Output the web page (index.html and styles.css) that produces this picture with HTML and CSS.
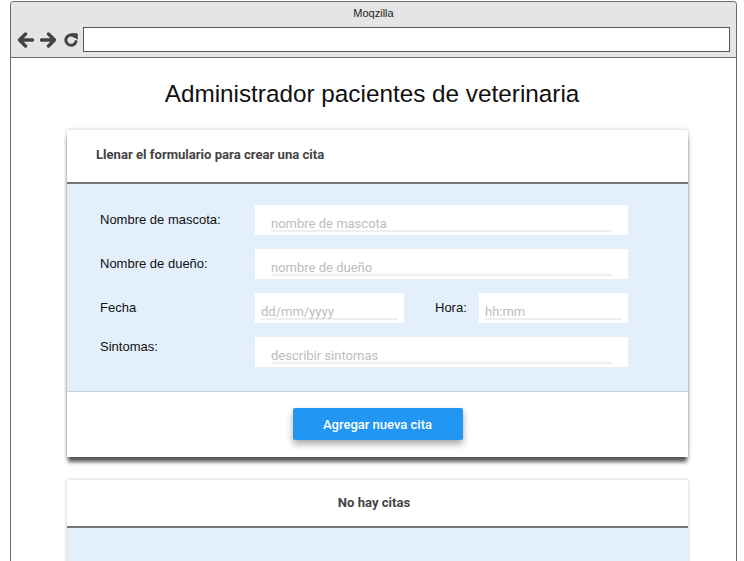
FILE: index.html
```html
<!DOCTYPE html>
<html lang="es">
<head>
<meta charset="utf-8">
<title>Moqzilla</title>
<link rel="stylesheet" href="styles.css">
</head>
<body>
<div class="browser">
  <div class="chrome">
    <div class="chrome-title">Moqzilla</div>
    <div class="chrome-bar">
      <div class="nav">
        <svg class="nav-icon" width="17" height="16" viewBox="0 0 17 16"><path d="M15.5 8H2.5M8.5 2L2.5 8l6 6" fill="none" stroke="#444" stroke-width="3.4" stroke-linecap="round" stroke-linejoin="round"/></svg>
        <svg class="nav-icon" width="17" height="16" viewBox="0 0 17 16"><path d="M1.5 8h13M8.5 2l6 6-6 6" fill="none" stroke="#444" stroke-width="3.4" stroke-linecap="round" stroke-linejoin="round"/></svg>
        <svg class="nav-icon reload" width="16" height="16" viewBox="0 0 16 16"><path d="M13 9.6A5.2 5.2 0 1 1 11.6 4.3" fill="none" stroke="#444" stroke-width="3" stroke-linecap="round"/><path d="M8.8 1.8h5.4v5.4z" fill="#444" stroke="#444" stroke-width="1" stroke-linejoin="round"/></svg>
      </div>
      <div class="address"></div>
    </div>
  </div>
  <div class="page">
    <h1 class="title">Administrador pacientes de veterinaria</h1>

    <section class="card">
      <div class="card-header">Llenar el formulario para crear una cita</div>
      <div class="card-body">
        <div class="row">
          <label class="label">Nombre de mascota:</label>
          <div class="field wide"><div class="line">nombre de mascota</div></div>
        </div>
        <div class="row">
          <label class="label">Nombre de dueño:</label>
          <div class="field wide"><div class="line">nombre de dueño</div></div>
        </div>
        <div class="row">
          <label class="label">Fecha</label>
          <div class="field half"><div class="line tight">dd/mm/yyyy</div></div>
          <label class="label hora">Hora:</label>
          <div class="field half"><div class="line tight">hh:mm</div></div>
        </div>
        <div class="row">
          <label class="label top">Sintomas:</label>
          <div class="field wide"><div class="line">describir sintomas</div></div>
        </div>
      </div>
      <div class="card-footer">
        <button class="btn" type="button">Agregar nueva cita</button>
      </div>
    </section>

    <section class="card second">
      <div class="card-header center">No hay citas</div>
      <div class="card-body empty"></div>
    </section>
  </div>
</div>
</body>
</html>
```

FILE: styles.css
```css
html, body {
  margin: 0;
  padding: 0;
  background: #fff;
}
body {
  font-family: "Liberation Sans", Arial, sans-serif;
  height: 561px;
  overflow: hidden;
}
.browser {
  margin: 1px 0 0 10px;
  width: 725px;
  border: 1px solid #6b6b6b;
  border-bottom: none;
  border-radius: 4px 4px 0 0;
  height: 600px;
}
.chrome {
  height: 55px;
  background: #e5e5e5;
  border-bottom: 1px solid #6b6b6b;
  border-radius: 3px 3px 0 0;
}
.chrome-title {
  text-align: center;
  font-size: 11px;
  color: #222;
  padding-top: 5px;
  height: 20px;
  line-height: 13px;
}
.chrome-bar {
  display: flex;
  align-items: center;
}
.nav {
  display: flex;
  align-items: center;
  gap: 6px;
  padding-left: 6px;
  width: 66px;
}
.nav-icon {
  display: block;
}
.address {
  width: 645px;
  height: 23px;
  background: #fff;
  border: 1px solid #555;
}
.page {
  padding-top: 21px;
}
.title {
  margin: 0 0 21px;
  font-weight: normal;
  font-size: 24.3px;
  line-height: 30px;
  text-align: center;
  color: #111;
  padding-right: 3px;
}
.card {
  margin-left: 56px;
  width: 621px;
  background: #fff;
  box-shadow: 0 6px 4px -1px rgba(0,0,0,0.65), 0 0 4px rgba(0,0,0,0.22);
}
.card-header {
  height: 52px;
  line-height: 50px;
  padding-left: 29px;
  font-family: Roboto, "Liberation Sans", sans-serif;
  font-weight: bold;
  font-size: 13.1px;
  color: #444;
  border-bottom: 2px solid #777;
}
.card-header.center {
  padding-left: 0;
  padding-right: 7px;
  text-align: center;
  height: 46px;
  line-height: 45px;
}
.card-body {
  background: #e3f0fb;
  padding: 21px 0 24px 33px;
  display: flex;
  flex-direction: column;
  gap: 14px;
  border-bottom: 1px solid #c8d3dd;
}
.card-body.empty {
  height: 60px;
  padding: 0;
  border: none;
}
.row {
  display: flex;
  align-items: center;
  height: 30px;
}
.label {
  width: 155px;
  font-size: 13px;
  color: #111;
  line-height: 18px;
}
.label.top {
  align-self: flex-start;
  padding-top: 1px;
}
.label.hora {
  width: 44px;
  margin-left: 31px;
}
.field {
  background: #fff;
  height: 30px;
  box-sizing: border-box;
  padding-top: 7px;
}
.field.wide {
  width: 373px;
}
.field.half {
  width: 149px;
}
.line {
  margin: 0 16px;
  height: 18px;
  line-height: 23px;
  font-family: Roboto, "Liberation Sans", sans-serif;
  font-size: 13px;
  color: #bdbdbd;
  border-bottom: 2px solid #eeeeee;
}
.line.tight {
  margin: 0 6px;
}
.card-footer {
  height: 65px;
  box-sizing: border-box;
  padding-top: 16px;
  display: flex;
  justify-content: center;
  align-items: flex-start;
}
.btn {
  width: 170px;
  height: 32px;
  border: none;
  border-radius: 2px;
  background: #2196f3;
  color: #fff;
  font-family: Roboto, "Liberation Sans", sans-serif;
  font-weight: 500;
  font-size: 13px;
  box-shadow: 0 4px 7px rgba(0,0,0,0.35);
  padding: 0;
}
.card.second {
  margin-top: 23px;
  box-shadow: 0 0 4px rgba(0,0,0,0.22);
}
```
